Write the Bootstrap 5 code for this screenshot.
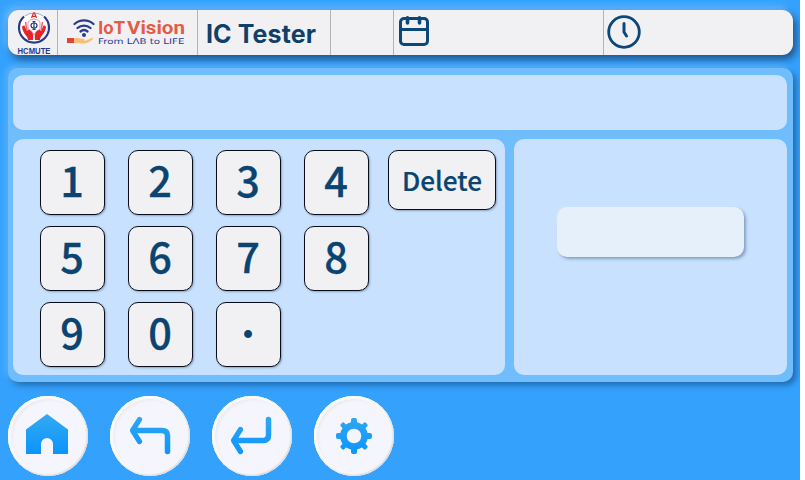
<!DOCTYPE html>
<html lang="en">
<head>
<meta charset="utf-8">
<meta name="viewport" content="width=device-width, initial-scale=1">
<title>IC Tester</title>
<link href="https://cdn.jsdelivr.net/npm/bootstrap@5.3.0/dist/css/bootstrap.min.css" rel="stylesheet">
<style>
body{background:#fff;color:#0b4470;font-family:"Noto Sans CJK SC","Noto Sans",sans-serif}
.device{width:800px;height:480px;background:#34a2fd;padding:10px 7px 0 8px;overflow:hidden}
.topbar{height:45px;border-radius:11px;background:#f1f1f4;box-shadow:3px 4px 8px rgba(20,50,90,.75),-3px -3px 7px rgba(150,205,255,.65)}
.cell{border-right:1px solid #b4b4b6}
.cell-logo{width:50px}.cell-brand{width:140px}.cell-title{width:133px}.cell-gap{width:63px}.cell-date{width:210px}
.title{font:700 25px/48px Inter,"Liberation Sans",sans-serif;padding-left:8px;color:#103f6a;letter-spacing:.1px}
.panel{margin-top:13px;height:314px;border-radius:10px;background:#70bdfd;padding:7px 6px 7px 5px;gap:9px;box-shadow:3px 3px 6px rgba(15,70,125,.65),-2px -2px 6px rgba(125,195,255,.7)}
.pane{background:#c8e1ff;border-radius:10px}
.display-pane{height:55px}
.keys-pane{width:492px;padding:11px 9px 0 27px}
.keypad{grid-template-columns:repeat(4,65px) 108px;grid-auto-rows:65px;column-gap:23px;row-gap:11px}
.key{padding:0 1px 7px 0;background:#f1f1f4!important;border:1px solid #080d18!important;border-radius:10px;color:#0b4470!important;font-size:41.5px;font-weight:500;line-height:56px;-webkit-text-stroke:.3px #0b4470;box-shadow:1px 1px 2px rgba(30,50,90,.35)}
.key-dot{font-size:34px;padding-bottom:3px;-webkit-text-stroke:0}
.key-delete{height:60px;margin-left:-4px;width:108px;font-size:26.2px;line-height:58px;padding:0;-webkit-text-stroke:.2px #0b4470}
.result{width:187px;height:50px;margin-top:68px;border-radius:10px;background:#e6f0fb;box-shadow:2px 2px 3px rgba(70,95,130,.5),-1px -1px 3px rgba(215,232,255,.6)}
.dock{margin-top:14px;gap:22px}
.round{width:80px;height:80px;padding:0;border:0;background:#f5f6fd!important;box-shadow:inset -1px -1px 2px #d5d6d9,inset 1px 1px 2px #fff,inset 0 0 0 3px #f8f8f8,inset 2px 2px 3px 2px #e9e9ed}
svg{display:block}
</style>
</head>
<body>
<main class="device d-flex flex-column">
<header class="topbar d-flex flex-shrink-0">
<div class="cell cell-logo">
<svg width="49" height="45" viewBox="0 0 49 45">
<circle cx="26" cy="18" r="14.8" fill="#fff"/>
<path d="M16 6.500A15 15 0 1 0 36 6.500" fill="none" stroke="#29388a" stroke-width="2.200"/>
<path d="M17 6a15 15 0 0 1 18 0" fill="none" stroke="#6b78a8" stroke-width=".6"/>
<path d="M14 17c1-2 3-2 3 0l2 4c1-1 2-2 3-1 3 2 3.500 4 3 10h-5c0-4-5-6-6-13M38 17c-1-2-3-2-3 0l-2 4c-1-1-2-2-3-1-3 2-3.500 4-3 10h5c0-4 5-6 6-13" fill="#e52329"/>
<path d="m17.500 12 1.500 9m15.500-9-1.500 9" stroke="#ef6265" stroke-width="1.500"/>
<path d="M20 12q6-6 12 0v7q-5 2-6 6-1-4-6-6z" fill="#fff" stroke="#e46b79" stroke-width=".7"/>
<path d="m23.500 8 2-5h1l2 5m-4-1.700h3" fill="none" stroke="#e52329" stroke-width="1.200"/>
<ellipse cx="26" cy="15.500" rx="3" ry="2.500" fill="none" stroke="#29388a" stroke-width="1.200"/>
<path d="M26 11.500v8m-1.500-8h3m-3 8h3" stroke="#29388a" stroke-width="1.200"/>
<text x="9.500" y="43.500" textLength="33" lengthAdjust="spacingAndGlyphs" font-family="Liberation Sans,sans-serif" font-weight="700" font-size="9" fill="#29388a">HCMUTE</text>
</svg>
</div>
<div class="cell cell-brand">
<svg width="139" height="45" viewBox="0 0 139 45">
<g fill="none" stroke="#2b3990" stroke-width="2.300" stroke-linecap="round"><path d="M16.500 14a14.500 14.500 0 0 1 19 0M19.500 18a10 10 0 0 1 13 0M22.500 21.500a5.500 5.500 0 0 1 7 0"/></g>
<circle cx="26" cy="25" r="2" fill="#2b3990"/>
<path d="M9 28h7v5H9z" fill="#dc4639"/>
<path d="M16 28.500q3-1.500 6 0l4 .5q1.500 1-1 1.500h3l6-2.500q2-.3 1 1.100-4 4.200-9 4.400-4-.4-10-.6z" fill="#f7be78"/>
<g font-family="Roboto,sans-serif" font-weight="700" font-size="18" fill="#e55b45"><text x="40" y="24.200" textLength="27" lengthAdjust="spacingAndGlyphs">IoT</text><text x="69" y="24.200" textLength="58" lengthAdjust="spacingAndGlyphs">Vision</text></g>
<text x="40" y="33.500" textLength="86.500" lengthAdjust="spacingAndGlyphs" font-family="DejaVu Sans,sans-serif" font-size="7.800" fill="#2b3990">From LΛB to LIFE</text>
</svg>
</div>
<div class="cell cell-title title text-nowrap">IC Tester</div>
<div class="cell cell-gap"></div>
<div class="cell cell-date">
<svg width="48" height="45" viewBox="0 0 48 45" fill="none" stroke="#0b4778"><rect x="6.500" y="8.500" width="27" height="26" rx="3.500" stroke-width="3"/><path d="M6 19.500h28" stroke-width="3"/><path d="M13.500 7.800v5.200m12-5.200v5.200" stroke-width="3.600" stroke-linecap="round"/></svg>
</div>
<div>
<svg width="48" height="45" viewBox="0 0 48 45" fill="none" stroke="#0b4778" stroke-linecap="round" stroke-linejoin="round"><circle cx="20" cy="22" r="15.300" stroke-width="2.800"/><path d="M20 13.500V22l2.500 4" stroke-width="3"/></svg>
</div>
</header>
<section class="panel d-flex flex-column flex-shrink-0">
<div class="pane display-pane flex-shrink-0"></div>
<div class="d-flex flex-grow-1" style="gap:9px">
<div class="pane keys-pane">
<div class="keypad d-grid">
<button class="btn key">1</button><button class="btn key">2</button><button class="btn key">3</button><button class="btn key">4</button><button class="btn key key-delete">Delete</button>
<button class="btn key">5</button><button class="btn key">6</button><button class="btn key">7</button><button class="btn key">8</button><span></span>
<button class="btn key">9</button><button class="btn key">0</button><button class="btn key key-dot">·</button>
</div>
</div>
<div class="pane flex-grow-1 d-flex justify-content-center"><div class="result"></div></div>
</div>
</section>
<nav class="dock d-flex">
<svg width="0" height="0" class="position-absolute"><defs><linearGradient id="blue" gradientUnits="userSpaceOnUse" x1="0" y1="18" x2="0" y2="60"><stop stop-color="#35a9ef"/><stop offset="1" stop-color="#0894ff"/></linearGradient></defs></svg>
<button class="btn round rounded-circle" aria-label="Home"><svg width="80" height="80"><path d="M39 18 60 33.500V58H45V48a6 6 0 0 0-12 0v10H18V33.500z" fill="url(#blue)"/></svg></button>
<button class="btn round rounded-circle" aria-label="Back"><svg width="80" height="80" fill="none" stroke="url(#blue)" stroke-linecap="round" stroke-linejoin="round"><path d="M24 34.500h28q5.500 0 5.500 5.500v15.500" stroke-width="5.500"/><path d="m29.500 23.500-7 11 7 11" stroke-width="5.200"/></svg></button>
<button class="btn round rounded-circle" aria-label="Enter"><svg width="80" height="80" fill="none" stroke="url(#blue)" stroke-linecap="round" stroke-linejoin="round"><path d="M24 44.500h27q5.500 0 5.500-5.500V23.500" stroke-width="5.500"/><path d="m28.500 33.500-7 11 7 11" stroke-width="5.200"/></svg></button>
<button class="btn round rounded-circle" aria-label="Settings"><svg width="80" height="80"><g fill="none" stroke="url(#blue)"><circle cx="40" cy="40" r="10.600" stroke-width="6.600"/></g><g fill="url(#blue)"><path d="M37 28v-4q0-2 2-2h2q2 0 2 2v4zM37 52v4q0 2 2 2h2q2 0 2-2v-4zM28 37h-4q-2 0-2 2v2q0 2 2 2h4zM52 37h4q2 0 2 2v2q0 2-2 2h-4z"/><path d="m29.500 33-2.600-2.600q-1.200-1.200 0-2.400l1.100-1.100q1.200-1.200 2.400 0L33 29.500zM50.500 33l2.600-2.600q1.200-1.200 0-2.400L52 26.900q-1.200-1.200-2.400 0L47 29.500zM29.500 47l-2.600 2.600q-1.200 1.200 0 2.400l1.100 1.100q1.200 1.200 2.400 0L33 50.500zM50.500 47l2.600 2.600q1.200 1.200 0 2.400L52 53.100q-1.200 1.200-2.400 0L47 50.500z"/></g></svg></button>
</nav>
</main>
<script src="https://cdn.jsdelivr.net/npm/bootstrap@5.3.0/dist/js/bootstrap.bundle.min.js"></script>
</body>
</html>
